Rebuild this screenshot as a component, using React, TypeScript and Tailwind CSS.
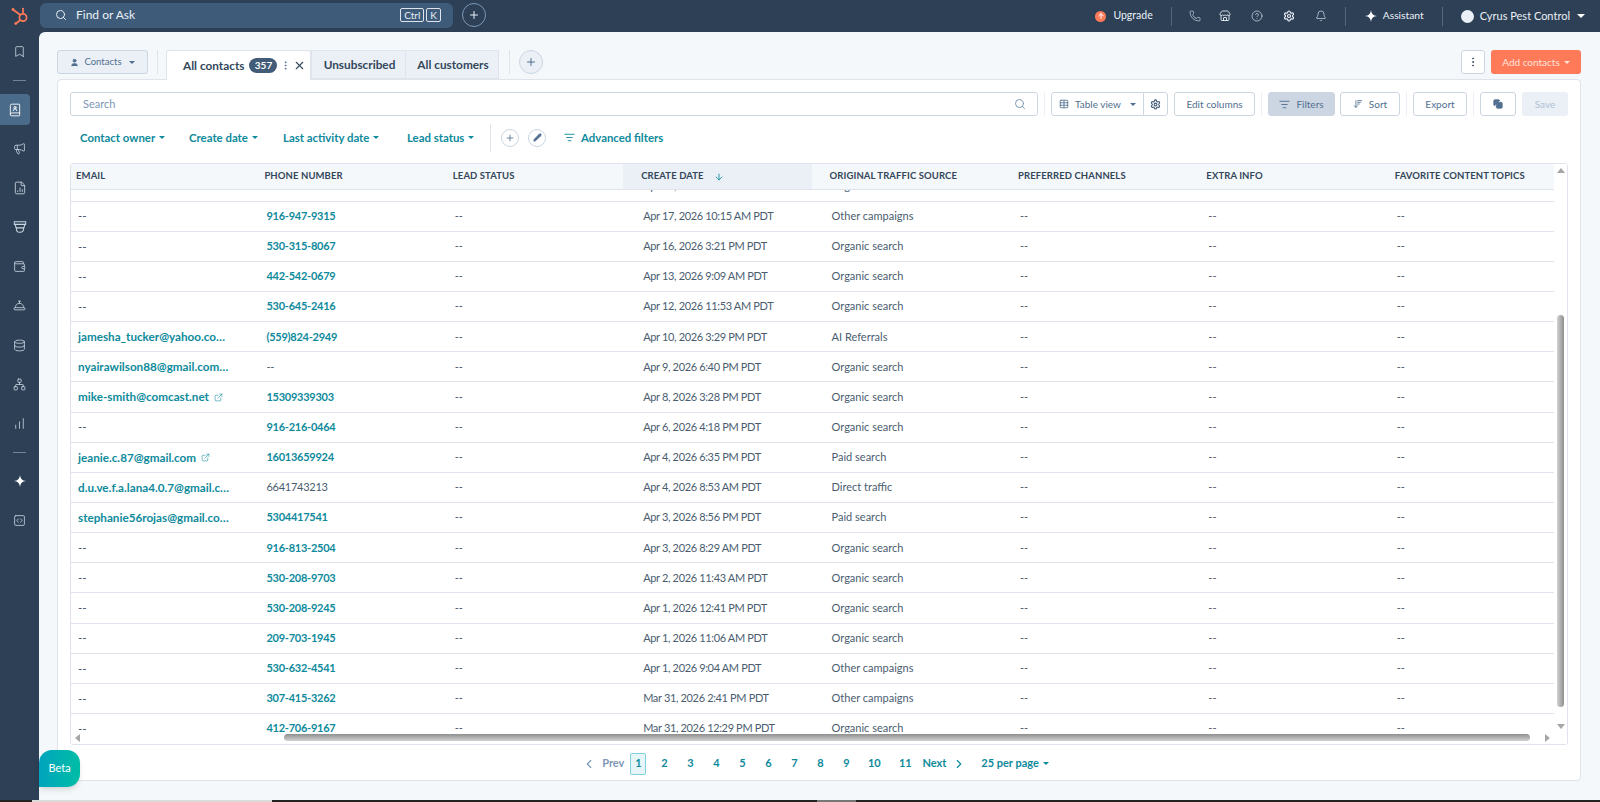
import React from 'react';
import {
  Bell, Bookmark, BookUser, ChevronLeft, ChevronRight, CircleHelp, Copy, Database, ExternalLink,
  ListFilter, Megaphone, MoreVertical, Network, Pencil, Phone, Plus, Search, Settings,
  Store, Table, User, Wallet, X, ArrowDown, ArrowDownWideNarrow, ArrowUp, ConciergeBell, ChartNoAxesColumnIncreasing, FileChartColumn, SquareCode,
} from 'lucide-react';

const COLUMNS = ['Email', 'Phone number', 'Lead status', 'Create date', 'Original traffic source', 'Preferred channels', 'Extra info', 'Favorite content topics'];

type Row = { email?: string; ext?: boolean; phone?: string; plainPhone?: boolean; date: string; source: string };

const ROWS: Row[] = [
  { phone: '', date: 'Apr 18, 2026 9:12 AM PDT', source: 'Organic search' },
  { phone: '916-947-9315', date: 'Apr 17, 2026 10:15 AM PDT', source: 'Other campaigns' },
  { phone: '530-315-8067', date: 'Apr 16, 2026 3:21 PM PDT', source: 'Organic search' },
  { phone: '442-542-0679', date: 'Apr 13, 2026 9:09 AM PDT', source: 'Organic search' },
  { phone: '530-645-2416', date: 'Apr 12, 2026 11:53 AM PDT', source: 'Organic search' },
  { email: 'jamesha_tucker@yahoo.co…', phone: '(559)824-2949', date: 'Apr 10, 2026 3:29 PM PDT', source: 'AI Referrals' },
  { email: 'nyairawilson88@gmail.com…', date: 'Apr 9, 2026 6:40 PM PDT', source: 'Organic search' },
  { email: 'mike-smith@comcast.net', ext: true, phone: '15309339303', date: 'Apr 8, 2026 3:28 PM PDT', source: 'Organic search' },
  { phone: '916-216-0464', date: 'Apr 6, 2026 4:18 PM PDT', source: 'Organic search' },
  { email: 'jeanie.c.87@gmail.com', ext: true, phone: '16013659924', date: 'Apr 4, 2026 6:35 PM PDT', source: 'Paid search' },
  { email: 'd.u.ve.f.a.lana4.0.7@gmail.c…', phone: '6641743213', plainPhone: true, date: 'Apr 4, 2026 8:53 AM PDT', source: 'Direct traffic' },
  { email: 'stephanie56rojas@gmail.co…', phone: '5304417541', date: 'Apr 3, 2026 8:56 PM PDT', source: 'Paid search' },
  { phone: '916-813-2504', date: 'Apr 3, 2026 8:29 AM PDT', source: 'Organic search' },
  { phone: '530-208-9703', date: 'Apr 2, 2026 11:43 AM PDT', source: 'Organic search' },
  { phone: '530-208-9245', date: 'Apr 1, 2026 12:41 PM PDT', source: 'Organic search' },
  { phone: '209-703-1945', date: 'Apr 1, 2026 11:06 AM PDT', source: 'Organic search' },
  { phone: '530-632-4541', date: 'Apr 1, 2026 9:04 AM PDT', source: 'Other campaigns' },
  { phone: '307-415-3262', date: 'Mar 31, 2026 2:41 PM PDT', source: 'Other campaigns' },
  { phone: '412-706-9167', date: 'Mar 31, 2026 12:29 PM PDT', source: 'Organic search' },
];

function Caret({ className = '' }: { className?: string }) {
  return <span className={`inline-block w-0 h-0 border-x-[3px] border-x-transparent border-t-[3px] border-t-current ${className}`} />;
}

function Star({ size = 12, className = '' }: { size?: number; className?: string }) {
  return (
    <svg width={size} height={size} viewBox="0 0 16 16" fill="currentColor" className={className}>
      <path d="M8 0C8.6 5 11 7.4 16 8 11 8.6 8.6 11 8 16 7.4 11 5 8.6 0 8 5 7.4 7.4 5 8 0Z" />
    </svg>
  );
}

function NavIcon({ children, className = 'h-[39.3px]' }: { children: React.ReactNode; className?: string }) {
  return <div className={`w-full flex items-center justify-center text-[#c9d5e1] ${className}`}>{children}</div>;
}

function Sidebar() {
  return (
    <aside className="w-[39px] shrink-0 pt-[5px]">
      <NavIcon className="h-[28px]"><Bookmark size={13} strokeWidth={1.5} /></NavIcon>
      <NavIcon className="h-[30px]"><span className="w-[13px] h-px bg-[#6f8499]" /></NavIcon>
      <div className="-mt-[1px] mb-[4px] w-[30px] h-[31px] rounded-r-[4px] bg-[#4b6b8a] flex items-center justify-center text-white">
        <BookUser size={14} strokeWidth={1.5} />
      </div>
      <NavIcon><Megaphone size={13} strokeWidth={1.5} /></NavIcon>
      <NavIcon><FileChartColumn size={14} strokeWidth={1.5} /></NavIcon>
      <NavIcon>
        <svg width="14" height="14" viewBox="0 0 16 16" fill="none" stroke="currentColor" strokeWidth="1.2">
          <path d="M1.5 2h13v3h-13zM2.5 5l1 4h9l1-4M4 9v1.5a3.5 3.5 0 0 0 3.5 3.5h1a3.5 3.5 0 0 0 3.5-3.5V9" />
        </svg>
      </NavIcon>
      <NavIcon><Wallet size={13} strokeWidth={1.5} /></NavIcon>
      <NavIcon><ConciergeBell size={13} strokeWidth={1.5} /></NavIcon>
      <NavIcon><Database size={13} strokeWidth={1.5} /></NavIcon>
      <NavIcon><Network size={13} strokeWidth={1.5} /></NavIcon>
      <NavIcon><ChartNoAxesColumnIncreasing size={13} strokeWidth={1.5} /></NavIcon>
      <NavIcon className="h-[18px]"><span className="w-[13px] h-px bg-[#6f8499]" /></NavIcon>
      <NavIcon><Star size={12} className="text-white" /></NavIcon>
      <NavIcon><SquareCode size={13} strokeWidth={1.5} /></NavIcon>
    </aside>
  );
}

function Sprocket() {
  return (
    <svg width="20" height="20" viewBox="0 0 20 20" fill="none" stroke="#ff7a59" strokeWidth="1.7">
      <circle cx="13" cy="11.5" r="3.6" />
      <path d="M13 7.5V3.5" />
      <path d="M10.5 9L3.5 4" />
      <path d="M10.3 14L6.5 17" />
      <circle cx="13" cy="2.8" r="1.1" fill="#ff7a59" stroke="none" />
      <circle cx="3" cy="3.5" r="1.4" fill="#ff7a59" stroke="none" />
      <circle cx="5.8" cy="17.5" r="1.4" fill="#ff7a59" stroke="none" />
    </svg>
  );
}

function TopBar() {
  return (
    <header className="h-[32px] shrink-0 flex items-center text-[#eaf0f6]">
      <div className="w-[40px] flex justify-center"><Sprocket /></div>
      <div className="mb-[2px] w-[413px] h-[25px] rounded-[6px] bg-[#3e5c7a] flex items-center pl-[15px] pr-[12px] text-[12px]">
        <Search size={12} />
        <span className="ml-[9px]">Find or Ask</span>
        <span className="ml-auto flex gap-[2px] text-[10px] leading-none">
          <span className="px-[3px] py-[1px] border border-[#dfe3eb] rounded-[2px]">Ctrl</span>
          <span className="px-[3px] py-[1px] border border-[#dfe3eb] rounded-[2px]">K</span>
        </span>
      </div>
      <div className="mb-[2px] ml-[9px] w-[24px] h-[24px] rounded-full border border-[#7c98b6] flex items-center justify-center">
        <Plus size={12} />
      </div>
      <div className="ml-auto flex items-center h-full text-[10.5px]">
        <span className="w-[11px] h-[11px] rounded-full bg-[#ff7a59] flex items-center justify-center text-white">
          <ArrowUp size={8} strokeWidth={3} />
        </span>
        <span className="ml-[7px]">Upgrade</span>
        <span className="ml-[18px] w-px h-[19px] bg-[#51677d]" />
        <Phone size={12} strokeWidth={1.5} className="ml-[17px] text-[#b9c8d6]" />
        <Store size={12} strokeWidth={1.8} className="ml-[18px]" />
        <CircleHelp size={12} strokeWidth={1.5} className="ml-[20px] text-[#c9d5e1]" />
        <Settings size={12} strokeWidth={2.4} className="ml-[20px]" />
        <Bell size={12} strokeWidth={1.5} className="ml-[20px] text-[#c9d5e1]" />
        <span className="ml-[18px] w-px h-[19px] bg-[#51677d]" />
        <Star size={12} className="ml-[19px] text-white" />
        <span className="ml-[6px] text-[10.3px]">Assistant</span>
        <span className="ml-[18px] w-px h-[19px] bg-[#51677d]" />
        <span className="ml-[18px] w-[13px] h-[13px] rounded-full bg-[#eaf0f6]" />
        <span className="ml-[6px] text-[11px]">Cyrus Pest Control</span>
        <Caret className="ml-[7px] mr-[15px] border-x-[4px] border-t-[4px] text-white" />
      </div>
    </header>
  );
}

function TabBar() {
  return (
    <div className="h-[29px] flex text-[#33475b]">
      <button className="w-[91px] h-[24px] rounded-[3px] bg-[#eaf0f6] border border-[#cbd6e2] flex items-center justify-center gap-[5px] text-[9.5px] text-[#516f90]">
        <User size={9} fill="currentColor" />
        Contacts
        <Caret className="ml-[2px]" />
      </button>
      <span className="ml-[9px] w-px h-[24px] bg-[#dfe3eb]" />
      <div className="ml-[8px] w-[145px] h-[30px] bg-white border border-b-0 border-[#dfe3eb] rounded-t-[3px] flex items-center pl-[16px] text-[11.8px] font-bold z-10">
        All contacts
        <span className="ml-[5px] h-[15px] w-[28px] rounded-full bg-[#425b76] text-white text-[10px] leading-[15px] text-center">357</span>
        <MoreVertical size={11} className="ml-[3px] text-[#516f90]" />
        <X size={13} className="ml-[2px]" />
      </div>
      <div className="w-[95px] h-[29px] pl-[2px] bg-[#eaf0f6] border border-[#dfe3eb] flex items-center justify-center text-[11.8px] font-bold">Unsubscribed</div>
      <div className="w-[93px] h-[29px] pl-[2px] bg-[#eaf0f6] border border-l-0 border-[#dfe3eb] flex items-center justify-center text-[11.8px] font-bold">All customers</div>
      <span className="ml-[10px] w-px h-[24px] bg-[#dfe3eb]" />
      <div className="ml-[9px] w-[24px] h-[24px] rounded-full bg-[#eaf0f6] border border-[#cbd6e2] flex items-center justify-center text-[#516f90]">
        <Plus size={12} />
      </div>
      <button className="ml-auto w-[24px] h-[24px] rounded-[3px] bg-white border border-[#cbd6e2] flex items-center justify-center text-[#33475b]">
        <MoreVertical size={12} />
      </button>
      <button className="ml-[6px] w-[90px] h-[24px] rounded-[3px] bg-[#ff7a59] flex items-center justify-center gap-[4px] text-[10px] text-[#ffe3db]">
        Add contacts
        <Caret />
      </button>
    </div>
  );
}

function ToolButton({ className = '', children }: { className?: string; children: React.ReactNode }) {
  return (
    <button className={`h-[24px] shrink-0 rounded-[3px] bg-white border border-[#cbd6e2] flex items-center justify-center gap-[6px] text-[10px] text-[#516f90] ${className}`}>
      {children}
    </button>
  );
}

function Sep({ className = 'mx-[6px]' }: { className?: string }) {
  return <span className={`w-px h-[24px] shrink-0 bg-[#eaf0f6] ${className}`} />;
}

function Toolbar() {
  return (
    <div className="flex items-center">
      <div className="flex-1 h-[24px] rounded-[3px] bg-white border border-[#cbd6e2] flex items-center pl-[12px] pr-[11px] text-[11px] text-[#7c98b6]">
        Search
        <Search size={12} className="ml-auto text-[#7c98b6]" />
      </div>
      <Sep />
      <div className="w-[117px] h-[24px] shrink-0 rounded-[3px] bg-white border border-[#cbd6e2] flex items-center text-[10px] text-[#516f90]">
        <div className="w-[92px] h-full flex items-center justify-center gap-[6px] border-r border-[#cbd6e2]">
          <Table size={10} />
          Table view
          <Caret className="ml-[3px]" />
        </div>
        <div className="flex-1 flex justify-center"><Settings size={11} strokeWidth={2.4} className="text-[#425b76]" /></div>
      </div>
      <ToolButton className="ml-[6px] w-[81px]">Edit columns</ToolButton>
      <Sep />
      <ToolButton className="w-[67px] !bg-[#cbd6e2] !border-[#cbd6e2]"><ListFilter size={11} />Filters</ToolButton>
      <ToolButton className="ml-[5px] w-[60px]"><ArrowDownWideNarrow size={10} />Sort</ToolButton>
      <Sep />
      <ToolButton className="w-[54px]">Export</ToolButton>
      <Sep />
      <ToolButton className="w-[36px]"><Copy size={10} fill="currentColor" /></ToolButton>
      <button className="ml-[6px] w-[46px] h-[24px] shrink-0 rounded-[3px] bg-[#eaf0f6] text-[10px] text-[#b0c1d4]">Save</button>
    </div>
  );
}

function FilterBar() {
  return (
    <div className="mt-[9px] h-[25px] flex items-center pl-[10px] text-[11.4px] font-bold text-[#0e8a9c]">
      {[['Contact owner', 'w-[109px]'], ['Create date', 'w-[94px]'], ['Last activity date', 'w-[124px]'], ['Lead status', 'w-[83px]']].map(([label, w]) => (
        <span key={label} className={`flex items-center gap-[4px] ${w}`}>
          {label}
          <Caret />
        </span>
      ))}
      <span className="w-px h-[28px] bg-[#dfe3eb]" />
      <span className="ml-[10px] w-[18px] h-[18px] rounded-full border border-[#cbd6e2] flex items-center justify-center text-[#516f90]"><Plus size={10} /></span>
      <span className="ml-[9px] w-[18px] h-[18px] rounded-full border border-[#cbd6e2] flex items-center justify-center text-[#516f90]"><Pencil size={9} fill="currentColor" /></span>
      <ListFilter size={11} className="ml-[18px]" />
      <span className="ml-[6px]">Advanced filters</span>
    </div>
  );
}

function Dash() {
  return <span className="font-normal text-[#4a5568]">--</span>;
}

function ContactRow({ row }: { row: Row }) {
  return (
    <div className="h-[30.15px] grid grid-cols-[repeat(8,188.4px)] items-center border-b border-[#dfe3eb] pl-[20px] text-[11px] text-[#4a5d70]">
      <div className="flex items-center gap-[5px] text-[11.7px] font-bold text-[#0e8a9c]">
        {row.email ?? <Dash />}
        {row.ext && <ExternalLink size={9} strokeWidth={1.5} />}
      </div>
      <div className={row.plainPhone ? 'tracking-[-0.25px]' : 'font-bold text-[#0e8a9c] tracking-[-0.25px]'}>{row.phone ?? <Dash />}</div>
      <Dash />
      <div className="tracking-[-0.35px]">{row.date}</div>
      <div>{row.source}</div>
      <Dash />
      <Dash />
      <Dash />
    </div>
  );
}

function ContactsTable() {
  return (
    <div className="relative mt-[13px] h-[582px] rounded-[3px] border border-[#dfe3eb] overflow-hidden">
      <div className="flex h-[26px] bg-[#f5f8fa] border-b border-[#dfe3eb] -ml-[13px] mr-[13px] text-[9.5px] font-bold text-[#33475b] tracking-[0.1px] uppercase">
        {COLUMNS.map((col) => (
          <div key={col} className={`w-[188.4px] shrink-0 pl-[18px] flex items-center ${col === 'Create date' ? 'bg-[#eaf0f6]' : ''}`}>
            {col}
            {col === 'Create date' && <ArrowDown size={10} className="ml-[10px] text-[#0e8a9c]" />}
          </div>
        ))}
      </div>
      <div className="h-[554px] overflow-hidden">
        <div className="-ml-[13px] -mt-[18.5px]">
          {ROWS.map((row) => <ContactRow key={row.date} row={row} />)}
        </div>
      </div>

      {/* scrollbars */}
      <div className="absolute top-0 right-0 bottom-0 w-[13px] bg-white z-20 flex flex-col items-center">
        <span className="mt-[4px] w-0 h-0 border-x-[4px] border-x-transparent border-b-[5px] border-b-[#a6a6a6]" />
        <span className="absolute top-[151px] h-[392px] w-[7px] rounded-full bg-gradient-to-r from-[#d2d2d2] to-[#8f8f8f]" />
        <span className="absolute top-[560px] w-0 h-0 border-x-[4px] border-x-transparent border-t-[5px] border-t-[#a6a6a6]" />
      </div>
      <div className="absolute left-0 right-0 bottom-0 h-[11px] bg-white/95 z-30">
        <span className="absolute left-[4px] top-[1px] w-0 h-0 border-y-[4px] border-y-transparent border-r-[5px] border-r-[#a6a6a6]" />
        <span className="absolute left-[213px] top-[1px] h-[7px] w-[1246px] rounded-full bg-gradient-to-b from-[#8f8f8f] to-[#d2d2d2]" />
        <span className="absolute right-[17px] top-[1px] w-0 h-0 border-y-[4px] border-y-transparent border-l-[5px] border-l-[#a6a6a6]" />
      </div>
    </div>
  );
}

function Pagination() {
  const pages = [['2', 'w-[26px]'], ['3', 'w-[26px]'], ['4', 'w-[26px]'], ['5', 'w-[26px]'], ['6', 'w-[26px]'], ['7', 'w-[26px]'], ['8', 'w-[26px]'], ['9', 'w-[26px]'], ['10', 'w-[30px]'], ['11', 'w-[32px]']];
  return (
    <div className="h-[37px] pr-[7px] flex items-center justify-center text-[11px] font-bold text-[#0e8a9c]">
      <ChevronLeft size={14} className="text-[#7c98b6]" />
      <span className="ml-[6px] text-[#7c98b6]">Prev</span>
      <span className="ml-[6px] w-[16px] h-[22px] rounded-[2px] bg-[#e5f5f8] border border-[#7fd1de] flex items-center justify-center">1</span>
      <span className="w-[5px]" />
      {pages.map(([p, w]) => <span key={p} className={`${w} text-center`}>{p}</span>)}
      <span className="ml-[1px]">Next</span>
      <ChevronRight size={14} className="ml-[6px]" />
      <span className="ml-[15px] flex items-center gap-[4px]">25 per page<Caret /></span>
    </div>
  );
}

export default function App() {
  return (
    <div
      className="relative w-[1600px] h-[802px] overflow-hidden bg-[#2d4056] flex flex-col"
      style={{ fontFamily: 'Lato, "Noto Sans", sans-serif' }}
    >
      <TopBar />
      <div className="flex flex-1 min-h-0">
        <Sidebar />
        <main className="flex-1 min-w-0 bg-[#f5f8fa] rounded-tl-[6px] pt-[18px] pl-[18px] pr-[19px]">
          <TabBar />
          <section className="h-[702px] bg-white border border-[#dfe3eb] rounded-[4px] pt-[12px] px-[12px]">
            <Toolbar />
            <FilterBar />
            <ContactsTable />
            <Pagination />
          </section>
        </main>
      </div>
      <div className="h-[2px] shrink-0 flex bg-[#222]">
        <span className="w-[32px]" />
        <span className="w-[240px] bg-[#dcdcdc]" />
        <span className="ml-[545px] w-[39px] bg-[#777]" />
      </div>
      <div className="absolute left-[39px] top-[750px] w-[41px] h-[37px] rounded-r-[13px] rounded-tl-[13px] bg-gradient-to-r from-[#00a4bd] to-[#00bda5] flex items-center justify-center text-[11px] text-white shadow-md">
        Beta
      </div>
    </div>
  );
}
